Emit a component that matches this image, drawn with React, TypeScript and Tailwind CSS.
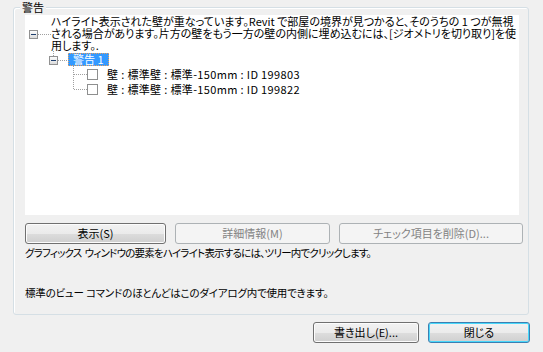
import React from "react";

const font = "font-['Meiryo_UI','Noto_Sans_CJK_JP',sans-serif] [font-feature-settings:'palt']";

function Btn({ children, w, disabled, def }: { children: React.ReactNode; w: string; disabled?: boolean; def?: boolean }) {
  if (disabled) {
    return (
      <div className={`${w} h-[21px] rounded-[3px] border border-[#adb2b5] bg-[#f4f4f4] text-[#838383] flex items-center justify-center text-[11px]`}>
        {children}
      </div>
    );
  }
  return (
    <div
      className={`${w} h-[21px] rounded-[3px] border ${def ? "border-[#3c7fb1] shadow-[inset_0_0_0_1px_#48d8fb]" : "border-[#707070] shadow-[inset_0_0_0_1px_#fcfcfc]"} bg-[linear-gradient(to_bottom,#f2f2f2_0%,#ebebeb_50%,#dddddd_51%,#cfcfcf_100%)] text-black flex items-center justify-center text-[11px]`}
    >
      {children}
    </div>
  );
}

function Checkbox() {
  return <div className="w-[11px] h-[11px] border border-[#8e8f8f] bg-white shrink-0" />;
}

export default function App() {
  return (
    <div className={`w-[543px] h-[352px] bg-[#f0f0f0] overflow-hidden text-black ${font}`}>
      <div className="pt-[7px] pl-[13px]">
        <div className="relative w-[516px] h-[308px] border border-[#d5dfe5] rounded-[3px] shadow-[inset_1px_1px_0_#ffffff]">
          <div className="absolute left-[6px] top-[-7px] bg-[#f0f0f0] px-[2px] text-[11px] leading-[13px]">警告</div>
          <div className="pt-[7px] pl-[11px]">
            <div className="relative w-[494px] h-[200px] bg-white text-[11px]">
              <svg className="absolute left-0 top-0 pointer-events-none" width="494" height="200">
                <defs>
                  <linearGradient id="mb" x1="0" y1="0" x2="0" y2="1">
                    <stop offset="0" stopColor="#ffffff" />
                    <stop offset="1" stopColor="#d8d8d8" />
                  </linearGradient>
                </defs>
                <g stroke="#a0a0a0" strokeWidth="1" strokeDasharray="1 1" fill="none">
                  <line x1="13" y1="19.5" x2="26" y2="19.5" />
                  <line x1="28.5" y1="36" x2="28.5" y2="41" />
                  <line x1="33" y1="45.5" x2="43" y2="45.5" />
                  <line x1="48.5" y1="51" x2="48.5" y2="75" />
                  <line x1="49" y1="59.5" x2="62" y2="59.5" />
                  <line x1="49" y1="74.5" x2="62" y2="74.5" />
                </g>
                <rect x="4.5" y="15.5" width="8" height="8" fill="url(#mb)" stroke="#919191" />
                <line x1="6" y1="19.5" x2="11" y2="19.5" stroke="#1f3f6e" />
                <rect x="24.5" y="41.5" width="8" height="8" fill="url(#mb)" stroke="#919191" />
                <line x1="26" y1="45.5" x2="31" y2="45.5" stroke="#1f3f6e" />
              </svg>
              <div className="pl-[26px] leading-[12px] whitespace-nowrap">
                <div>ハイライト表示された壁が重なっています。Revit で部屋の境界が見つかると、そのうちの 1 つが無視</div>
                <div>される場合があります。片方の壁をもう一方の壁の内側に埋め込むには、[ジオメトリを切り取り]を使</div>
                <div>用します。.</div>
              </div>
              <div className="mt-[2px] pl-[43px] flex">
                <div className="h-[13px] px-[4px] bg-[#3399ff] text-white leading-[11px] border border-dotted border-[#e8a060] flex items-center">警告 1</div>
              </div>
              <div className="mt-[1px] pl-[62px]">
                <div className="h-[15px] flex items-center gap-[9px]">
                  <Checkbox />
                  <span className="leading-[15px] tracking-[0.35px]">壁 : 標準壁 : 標準-150mm : ID 199803</span>
                </div>
                <div className="h-[15px] flex items-center gap-[9px]">
                  <Checkbox />
                  <span className="leading-[15px] tracking-[0.35px]">壁 : 標準壁 : 標準-150mm : ID 199822</span>
                </div>
              </div>
            </div>
            <div className="mt-[8px] flex gap-[9px]">
              <Btn w="w-[141px]">表示(S)</Btn>
              <Btn w="w-[155px]" disabled>詳細情報(M)</Btn>
              <Btn w="w-[184px]" disabled>チェック項目を削除(D)...</Btn>
            </div>
            <div className="mt-[2px] text-[10.5px] leading-[13px] tracking-[-0.8px] whitespace-nowrap">グラフィックス&nbsp; ウィンドウの要素をハイライト表示するには、ツリー内でクリックします。</div>
            <div className="mt-[27px] text-[10.5px] leading-[13px] tracking-[-0.2px] whitespace-nowrap">標準のビュー コマンドのほとんどはこのダイアログ内で使用できます。</div>
          </div>
        </div>
      </div>
      <div className="mt-[7px] flex justify-end gap-[9px] pr-[13px]">
        <Btn w="w-[106px]">書き出し(E)...</Btn>
        <Btn w="w-[102px]" def>閉じる</Btn>
      </div>
    </div>
  );
}
